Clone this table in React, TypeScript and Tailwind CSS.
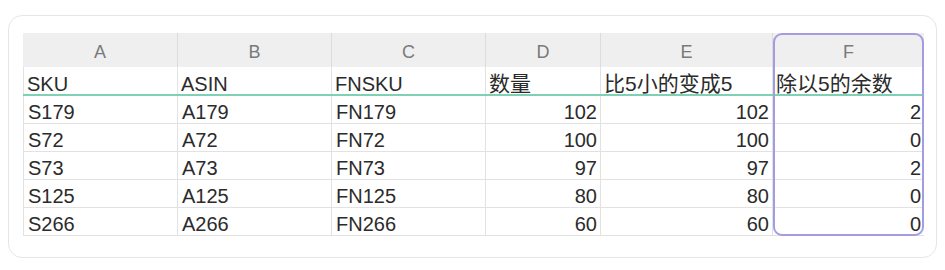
import React from 'react'

const cols = ['A', 'B', 'C', 'D', 'E', 'F']

const head = ['SKU', 'ASIN', 'FNSKU', '数量', '比5小的变成5', '除以5的余数']

const rows: (string | number)[][] = [
  ['S179', 'A179', 'FN179', 102, 102, 2],
  ['S72', 'A72', 'FN72', 100, 100, 0],
  ['S73', 'A73', 'FN73', 97, 97, 2],
  ['S125', 'A125', 'FN125', 80, 80, 0],
  ['S266', 'A266', 'FN266', 60, 60, 0],
]

const grid = 'grid grid-cols-[155px_154px_154px_115px_172px_151px]'

export default function App() {
  return (
    <div className="h-[270px] w-[945px] bg-white px-[8px] pt-[15px] font-['Liberation_Sans','Noto_Sans_CJK_SC',sans-serif]">
      <div className="h-[243px] w-[929px] rounded-[14px] border border-[#e6e6e6] pl-[14px] pt-[17px]">
        <div className="relative w-[901px] text-[20px] text-[#2b2b2b]">
          {/* column letters */}
          <div className={`${grid} h-[34px] bg-[#efefef]`}>
            {cols.map((c, i) => (
              <div
                key={c}
                className={`flex items-center justify-center pt-[4px] text-[18px] text-[#7a7a7a] ${i < 5 ? 'border-r border-[#dcdcdc]' : ''}`}
              >
                {c}
              </div>
            ))}
          </div>
          {/* header row */}
          <div className={`${grid} h-[29px] border-b-2 border-[#7fd0b4]`}>
            {head.map((h, i) => (
              <div
                key={h}
                className={`flex items-end pl-[3px] leading-none ${i >= 3 ? 'text-[21px]' : ''} ${i === 0 ? 'border-l border-[#e2e2e2]' : ''} ${i < 5 ? 'border-r border-[#e2e2e2]' : ''}`}
              >
                {h}
              </div>
            ))}
          </div>
          {rows.map((r, ri) => (
            <div key={ri} className={`${grid} h-[28px] border-b border-[#e2e2e2]`}>
              {r.map((v, i) => (
                <div
                  key={i}
                  className={`flex items-end pb-[1px] pl-[4px] pr-[3px] leading-none ${typeof v === 'number' ? 'justify-end' : ''} ${i === 0 ? 'border-l border-[#e2e2e2]' : ''} ${i < 5 ? 'border-r border-[#e2e2e2]' : ''}`}
                >
                  {v}
                </div>
              ))}
            </div>
          ))}
          {/* selected column F */}
          <div className="pointer-events-none absolute top-0 bottom-0 left-[750px] w-[151px] rounded-[9px] border-2 border-[#a59be0]" />
        </div>
      </div>
    </div>
  )
}
